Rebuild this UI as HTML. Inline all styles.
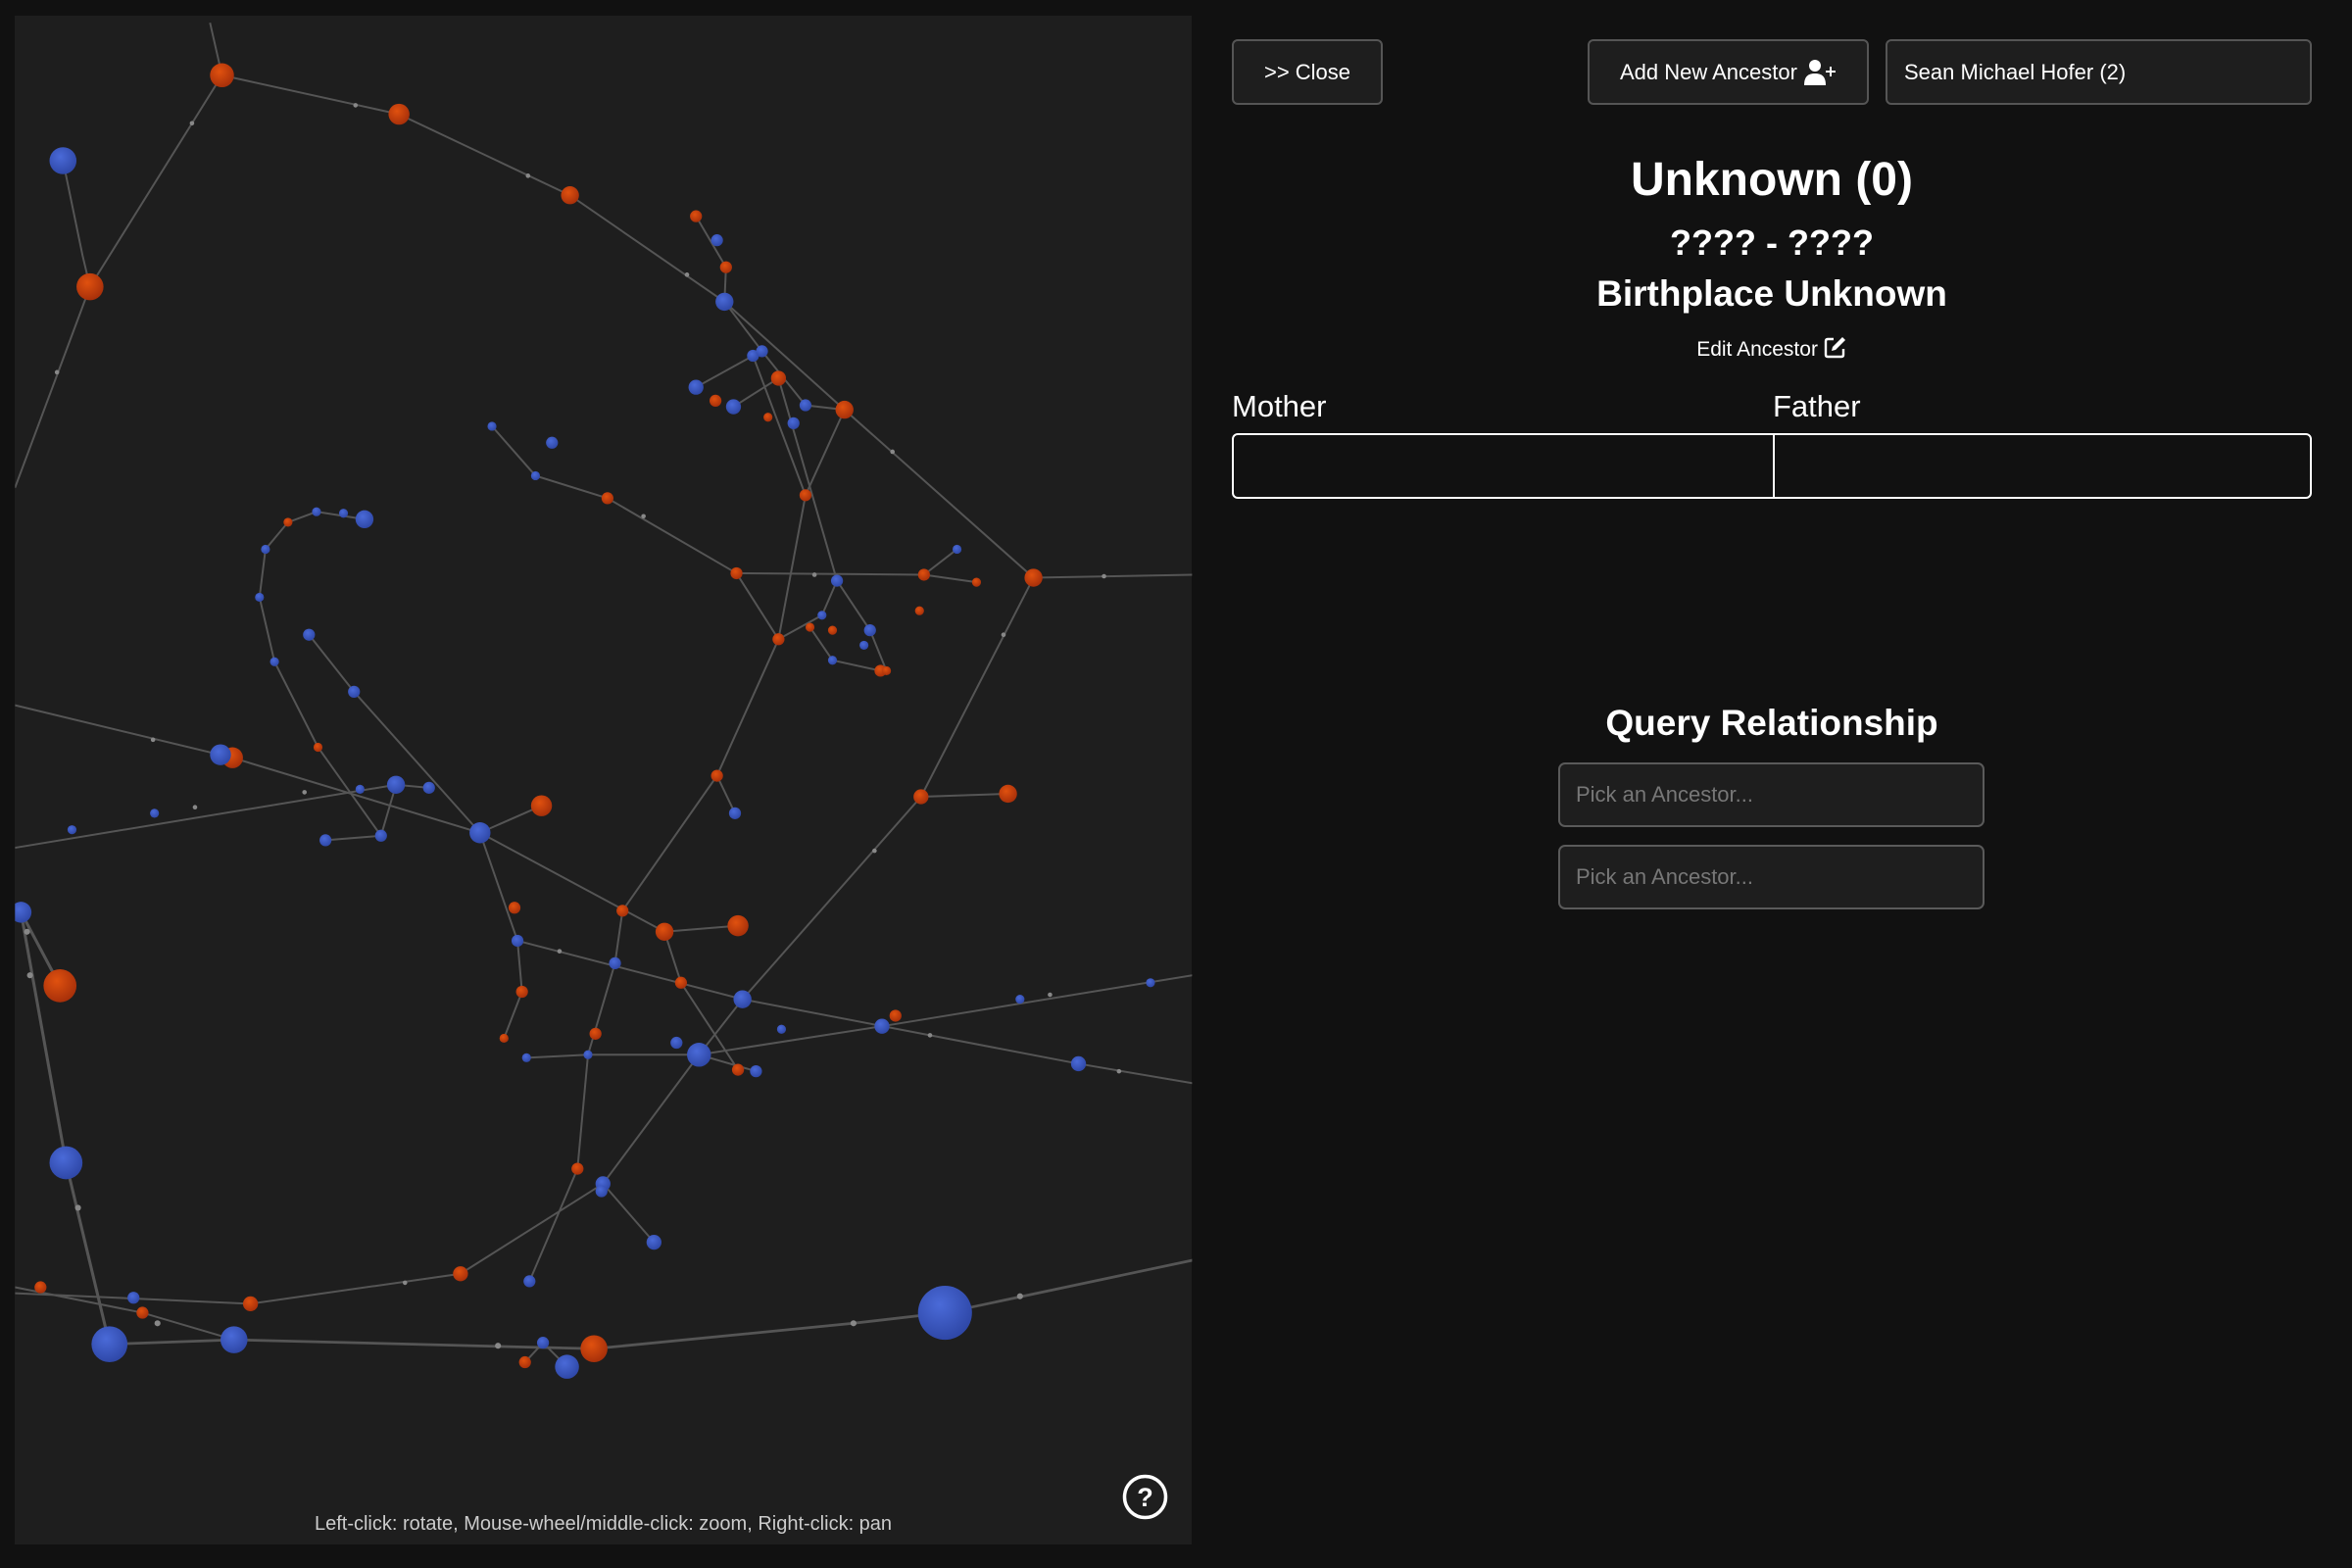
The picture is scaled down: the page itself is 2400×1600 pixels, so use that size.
<!DOCTYPE html>
<html><head><meta charset="utf-8"><style>
*{margin:0;padding:0;box-sizing:border-box}
body{width:2400px;height:1600px;background:#111;font-family:"Liberation Sans",sans-serif;color:#fff;position:relative;overflow:hidden}
#cv{position:absolute;left:15px;top:16px;width:1201px;height:1560px;background:#1e1e1e;overflow:hidden}
.btn{position:absolute;top:40px;height:67px;background:#1e1e1e;border:2px solid #555;border-radius:6px;font-size:22px;display:flex;align-items:center}
.c{position:absolute;left:1257px;width:1102px;text-align:center;font-weight:bold}
.inp{position:absolute;left:1590px;width:435px;height:66px;background:#1e1e1e;border:2px solid #5a5a5a;border-radius:7px;color:#777;font-size:22px;padding-left:16px;display:flex;align-items:center}
</style></head><body>
<div id="cv"></div>
<svg style="position:absolute;left:0;top:0" width="2400" height="1600" viewBox="0 0 1568 1045">
<defs>
<clipPath id="cp"><rect x="10" y="10.5" width="784.7" height="1018.5"/></clipPath>
<radialGradient id="o" cx="40%" cy="35%" r="65%"><stop offset="0" stop-color="#e0510f"/><stop offset="1" stop-color="#a8300a"/></radialGradient>
<radialGradient id="b" cx="40%" cy="35%" r="65%"><stop offset="0" stop-color="#4a6ad8"/><stop offset="1" stop-color="#2f48a8"/></radialGradient>
</defs>
<g clip-path="url(#cp)">
<g fill="none" stroke="#555" stroke-width="1.3">
<polyline points="140,15 148,50 266,76 380,130 483,201 563,273 689,385 795,383"/>
<polyline points="148,50 60,191 10,325"/>
<polyline points="42,107 55,170 60,191"/>
<polyline points="689,385 614,531 495,666 466,703 402,789 307,849 167,869 10,862"/>
<polyline points="10,470 155,505 320,555 443,621 492,617"/>
<polyline points="10,565 264,523"/>
<polyline points="361,537 320,555"/>
<polyline points="14,608 44,775 73,896" stroke-width="2"/>
<polyline points="14,608 40,657" stroke-width="2"/>
<polyline points="73,896 156,893 396,899 569,882 630,875 795,840" stroke-width="1.8"/>
<polyline points="345,627 495,666 719,709 795,722"/>
<polyline points="466,703 588,684 795,650"/>
<polyline points="614,531 672,529"/>
<polyline points="353,854 385,779 392,703 410,642 415,607 478,517 519,426 537,330 563,273"/>
<polyline points="206,423 236,461 320,555 345,627 348,661 336,692"/>
<polyline points="328,284 357,317 405,332 491,382 519,426"/>
<polyline points="491,382 616,383 651,388"/>
<polyline points="10,858 95,875 156,893"/>
<polyline points="243,346 211,341 192,348 177,366 173,398 183,441 212,498 254,557"/>
<polyline points="351,705 392,703 466,703 504,714"/>
<polyline points="464,144 484,178 483,201"/>
<polyline points="483,201 508,234 537,270 563,273"/>
<polyline points="464,258 502,237 537,330"/>
<polyline points="489,271 519,252 558,387 548,410 519,426"/>
<polyline points="558,387 580,420 591,447"/>
<polyline points="540,418 555,440 587,447"/>
<polyline points="616,383 638,366"/>
<polyline points="217,560 254,557 264,523 286,525"/>
<polyline points="478,517 490,542"/>
<polyline points="402,789 436,828"/>
<polyline points="378,911 362,895 350,908"/>
<polyline points="443,621 454,655 492,713"/>
</g>
<g fill="#888">
<circle cx="128" cy="82" r="1.5"/><circle cx="38" cy="248" r="1.5"/><circle cx="237" cy="70" r="1.5"/><circle cx="352" cy="117" r="1.5"/><circle cx="458" cy="183" r="1.5"/><circle cx="595" cy="301" r="1.5"/><circle cx="736" cy="384" r="1.5"/><circle cx="669" cy="423" r="1.5"/><circle cx="583" cy="567" r="1.5"/><circle cx="102" cy="493" r="1.5"/><circle cx="203" cy="528" r="1.5"/><circle cx="18" cy="621" r="2"/><circle cx="20" cy="650" r="2"/><circle cx="52" cy="805" r="2"/><circle cx="105" cy="882" r="2"/><circle cx="332" cy="897" r="2"/><circle cx="569" cy="882" r="2"/><circle cx="680" cy="864" r="2"/><circle cx="270" cy="855" r="1.5"/><circle cx="620" cy="690" r="1.5"/><circle cx="746" cy="714" r="1.5"/><circle cx="700" cy="663" r="1.5"/><circle cx="373" cy="634" r="1.5"/><circle cx="130" cy="538" r="1.5"/><circle cx="429" cy="344" r="1.5"/><circle cx="543" cy="383" r="1.5"/>
</g>
<g fill="url(#o)">
<circle cx="148" cy="50" r="8"/><circle cx="266" cy="76" r="7"/><circle cx="380" cy="130" r="6"/><circle cx="60" cy="191" r="9"/><circle cx="464" cy="144" r="4"/><circle cx="484" cy="178" r="4"/><circle cx="563" cy="273" r="6"/><circle cx="519" cy="252" r="5"/><circle cx="477" cy="267" r="4"/><circle cx="512" cy="278" r="3"/><circle cx="537" cy="330" r="4"/><circle cx="405" cy="332" r="4"/><circle cx="491" cy="382" r="4"/><circle cx="616" cy="383" r="4"/><circle cx="651" cy="388" r="3"/><circle cx="613" cy="407" r="3"/><circle cx="689" cy="385" r="6"/><circle cx="540" cy="418" r="3"/><circle cx="519" cy="426" r="4"/><circle cx="555" cy="420" r="3"/><circle cx="587" cy="447" r="4"/><circle cx="591" cy="447" r="3"/><circle cx="155" cy="505" r="7"/><circle cx="361" cy="537" r="7"/><circle cx="478" cy="517" r="4"/><circle cx="614" cy="531" r="5"/><circle cx="672" cy="529" r="6"/><circle cx="212" cy="498" r="3"/><circle cx="192" cy="348" r="3"/><circle cx="40" cy="657" r="11"/><circle cx="343" cy="605" r="4"/><circle cx="415" cy="607" r="4"/><circle cx="443" cy="621" r="6"/><circle cx="492" cy="617" r="7"/><circle cx="454" cy="655" r="4"/><circle cx="348" cy="661" r="4"/><circle cx="336" cy="692" r="3"/><circle cx="397" cy="689" r="4"/><circle cx="492" cy="713" r="4"/><circle cx="597" cy="677" r="4"/><circle cx="385" cy="779" r="4"/><circle cx="307" cy="849" r="5"/><circle cx="167" cy="869" r="5"/><circle cx="95" cy="875" r="4"/><circle cx="27" cy="858" r="4"/><circle cx="396" cy="899" r="9"/><circle cx="350" cy="908" r="4"/>
</g>
<g fill="url(#b)">
<circle cx="42" cy="107" r="9"/><circle cx="483" cy="201" r="6"/><circle cx="478" cy="160" r="4"/><circle cx="502" cy="237" r="4"/><circle cx="508" cy="234" r="4"/><circle cx="464" cy="258" r="5"/><circle cx="489" cy="271" r="5"/><circle cx="529" cy="282" r="4"/><circle cx="537" cy="270" r="4"/><circle cx="328" cy="284" r="3"/><circle cx="368" cy="295" r="4"/><circle cx="357" cy="317" r="3"/><circle cx="243" cy="346" r="6"/><circle cx="229" cy="342" r="3"/><circle cx="211" cy="341" r="3"/><circle cx="177" cy="366" r="3"/><circle cx="173" cy="398" r="3"/><circle cx="206" cy="423" r="4"/><circle cx="183" cy="441" r="3"/><circle cx="236" cy="461" r="4"/><circle cx="558" cy="387" r="4"/><circle cx="638" cy="366" r="3"/><circle cx="580" cy="420" r="4"/><circle cx="576" cy="430" r="3"/><circle cx="555" cy="440" r="3"/><circle cx="548" cy="410" r="3"/><circle cx="147" cy="503" r="7"/><circle cx="264" cy="523" r="6"/><circle cx="286" cy="525" r="4"/><circle cx="240" cy="526" r="3"/><circle cx="320" cy="555" r="7"/><circle cx="217" cy="560" r="4"/><circle cx="254" cy="557" r="4"/><circle cx="48" cy="553" r="3"/><circle cx="103" cy="542" r="3"/><circle cx="14" cy="608" r="7"/><circle cx="490" cy="542" r="4"/><circle cx="345" cy="627" r="4"/><circle cx="410" cy="642" r="4"/><circle cx="495" cy="666" r="6"/><circle cx="466" cy="703" r="8"/><circle cx="451" cy="695" r="4"/><circle cx="504" cy="714" r="4"/><circle cx="521" cy="686" r="3"/><circle cx="588" cy="684" r="5"/><circle cx="680" cy="666" r="3"/><circle cx="719" cy="709" r="5"/><circle cx="767" cy="655" r="3"/><circle cx="351" cy="705" r="3"/><circle cx="392" cy="703" r="3"/><circle cx="402" cy="789" r="5"/><circle cx="401" cy="794" r="4"/><circle cx="436" cy="828" r="5"/><circle cx="353" cy="854" r="4"/><circle cx="44" cy="775" r="11"/><circle cx="73" cy="896" r="12"/><circle cx="156" cy="893" r="9"/><circle cx="89" cy="865" r="4"/><circle cx="378" cy="911" r="8"/><circle cx="362" cy="895" r="4"/><circle cx="630" cy="875" r="18"/>
</g>
</g>
</svg>
<svg style="position:absolute;left:1145px;top:1504px" width="47" height="47" viewBox="0 0 47 47"><circle cx="23.5" cy="23.5" r="21" fill="none" stroke="#fff" stroke-width="3.5"/><text x="23.5" y="33" text-anchor="middle" font-family="Liberation Sans" font-weight="bold" font-size="27" fill="#fff">?</text></svg>
<div style="position:absolute;left:15px;width:1201px;top:1544px;text-align:center;font-size:20px;color:#ccc">Left-click: rotate, Mouse-wheel/middle-click: zoom, Right-click: pan</div>

<div class="btn" style="left:1257px;width:154px;justify-content:center">&gt;&gt; Close</div>
<div class="btn" style="left:1620px;width:287px;justify-content:center">Add New Ancestor&nbsp;<svg width="34" height="28" viewBox="0 0 34 28"><circle cx="12" cy="7" r="6" fill="#fff"/><path d="M1 27 C1 18 5 15 12 15 C19 15 23 18 23 27 Z" fill="#fff"/><path d="M28 8 V18 M23 13 H33" stroke="#fff" stroke-width="2"/></svg></div>
<div class="btn" style="left:1924px;width:435px;padding-left:17px">Sean Michael Hofer (2)</div>

<div class="c" style="top:156px;font-size:48px">Unknown (0)</div>
<div class="c" style="top:227px;font-size:36px">???? - ????</div>
<div class="c" style="top:279px;font-size:37px">Birthplace Unknown</div>
<div class="c" style="top:342px;font-size:21px;font-weight:normal">Edit Ancestor <svg width="24" height="24" viewBox="0 0 24 24" style="vertical-align:-3px"><path d="M10 4 H4 Q2 4 2 6 V20 Q2 22 4 22 H18 Q20 22 20 20 V14" fill="none" stroke="#fff" stroke-width="2.4"/><path d="M19 2 L22 5 L12 15 L8 16 L9 12 Z" fill="#fff"/></svg></div>
<div style="position:absolute;left:1257px;top:397px;font-size:31px">Mother</div>
<div style="position:absolute;left:1809px;top:397px;font-size:31px">Father</div>
<div style="position:absolute;left:1257px;top:442px;width:1102px;height:67px;border:2px solid #fff;border-radius:6px"><div style="position:absolute;left:550px;top:0;bottom:0;width:2px;background:#fff"></div></div>
<div class="c" style="top:717px;font-size:37px">Query Relationship</div>
<div class="inp" style="top:778px">Pick an Ancestor...</div>
<div class="inp" style="top:862px">Pick an Ancestor...</div>
</body></html>
